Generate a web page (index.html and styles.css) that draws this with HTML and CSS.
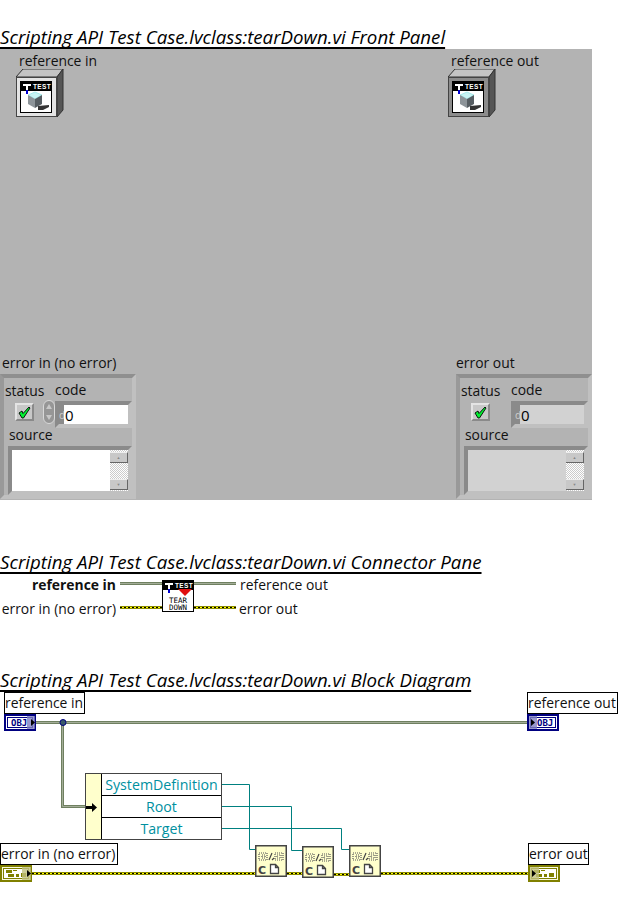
FILE: index.html
```html
<!DOCTYPE html>
<html>
<head>
  <meta charset="utf-8">
  <title>tearDown.vi</title>
  <link rel="stylesheet" href="styles.css">
</head>

<body>
  <!-- shared drawings -->
  <svg class="defs" width="0" height="0">
    <symbol id="head" viewBox="0 0 32 32">
      <rect x="0.5" y="0.5" width="31" height="31" fill="#fff" stroke="#000"/>
      <rect x="1" y="1" width="30" height="9" fill="#000"/>
      <rect x="3" y="3" width="8" height="2" fill="#fff"/>
      <rect x="6" y="3" width="2" height="6" fill="#fff"/>
      <rect x="6" y="9" width="2" height="4" fill="#0000d0"/>
      <text x="13" y="8" class="ico-txt">TEST</text>
    </symbol>
    <symbol id="cube" viewBox="0 0 32 32">
      <use href="#head" width="32" height="32"/>
      <polygon points="18,25 29,24 29,26 23,29 18,29" fill="#333"/>
      <polygon points="8,14 15,11 22,14 15,18" fill="#c8f4f4" stroke="#7fe0e0" stroke-width="0.6"/>
      <polygon points="8,14 15,18 15,27 8,23" fill="#8d9499"/>
      <polygon points="15,18 22,14 22,23 15,27" fill="#565d62"/>
    </symbol>
    <symbol id="ctl" viewBox="0 0 48 48">
      <polygon points="0,8 7,0 47,0 41,8" fill="#c4c4c4" stroke="#333"/>
      <polygon points="41,8 47,0 47,41 41,48" fill="#555" stroke="#333"/>
    </symbol>
    <symbol id="cnode" viewBox="0 0 32 32">
      <rect x="0.75" y="0.75" width="30.5" height="30.5" fill="#ffffcc" stroke="#444" stroke-width="1.5"/>
      <g fill="none" stroke="#555" stroke-width="1.2" stroke-dasharray="1 1">
        <rect x="4" y="8" width="8" height="7"/>
        <rect x="7" y="10" width="3" height="3"/>
        <rect x="20" y="8" width="8" height="7"/>
        <rect x="22" y="10" width="4" height="3"/>
      </g>
      <path d="M14 15 L17 8 M17 15 L19 13" stroke="#444" stroke-width="1.2"/>
      <text x="3" y="29" class="c-txt">C</text>
      <path d="M15.500 19.500 h5 l3 3 v6 h-8 z M20.500 19.500 v3 h3" fill="#fff" stroke="#444" stroke-width="1.300"/>
    </symbol>
    <symbol id="errbox" viewBox="0 0 32 17">
      <rect x="1" y="1" width="30" height="15" fill="#fafae0" stroke="#808000" stroke-width="2"/>
      <rect x="3.500" y="3.500" width="25" height="10" fill="#fff" stroke="#808000"/>
      <rect x="6" y="5" width="6" height="3" fill="#808000"/>
      <rect x="13" y="5" width="4" height="1" fill="#808000"/>
      <rect x="8" y="9" width="6" height="3" fill="#808000"/>
      <rect x="16" y="9" width="3" height="3" fill="#808000"/>
      <rect x="21" y="8" width="5" height="4" fill="#808000"/>
    </symbol>
  </svg>

  <h2 class="title first">Scripting API Test Case.lvclass:tearDown.vi Front Panel</h2>

  <div class="panel">
    <div class="ctl ctl-in">
      <span class="ctl-label">reference in</span>
      <div class="ctl-box">
        <svg class="ctl-3d" width="48" height="48"><use href="#ctl"/></svg>
        <div class="ctl-face"><svg width="32" height="32"><use href="#cube"/></svg></div>
      </div>
    </div>
    <div class="ctl ctl-out">
      <span class="ctl-label">reference out</span>
      <div class="ctl-box">
        <svg class="ctl-3d" width="48" height="48"><use href="#ctl"/></svg>
        <div class="ctl-face dark"><svg width="32" height="32"><use href="#cube"/></svg></div>
      </div>
    </div>

    <!-- error in -->
    <div class="err err-in">
      <span class="err-name">error in (no error)</span>
      <div class="cluster">
        <div class="err-row">
          <div class="status">
            <span class="status-label">status</span>
            <div class="check"><svg width="13" height="13" viewBox="0 0 13 13"><path d="M1 7 L4 5 L5 7.500 L11 1 L12 2 L5.500 12 L4 12 Z" fill="#00f030" stroke="#000" stroke-width="0.9"/></svg></div>
          </div>
          <div class="spin"><span class="up"></span><span class="down"></span></div>
          <div class="code">
            <span class="code-label">code</span>
            <div class="num"><span class="radix">d</span><span class="num-val">0</span></div>
          </div>
        </div>
        <div class="src-label">source</div>
        <div class="str">
          <div class="str-text"></div>
          <div class="sbar"><span class="sbtn">&#9650;</span><span class="sbtn">&#9660;</span></div>
        </div>
      </div>
    </div>

    <!-- error out -->
    <div class="err err-out">
      <span class="err-name">error out</span>
      <div class="cluster">
        <div class="err-row">
          <div class="status">
            <span class="status-label">status</span>
            <div class="check"><svg width="13" height="13" viewBox="0 0 13 13"><path d="M1 7 L4 5 L5 7.500 L11 1 L12 2 L5.500 12 L4 12 Z" fill="#00f030" stroke="#000" stroke-width="0.9"/></svg></div>
          </div>
          <div class="spin none"></div>
          <div class="code">
            <span class="code-label">code</span>
            <div class="num ro"><span class="radix">d</span><span class="num-val">0</span></div>
          </div>
        </div>
        <div class="src-label">source</div>
        <div class="str ro">
          <div class="str-text"></div>
          <div class="sbar"><span class="sbtn">&#9650;</span><span class="sbtn">&#9660;</span></div>
        </div>
      </div>
    </div>
  </div>

  <h2 class="title second">Scripting API Test Case.lvclass:tearDown.vi Connector Pane</h2>

  <div class="pane">
    <span class="in-name req">reference in</span>
    <div class="wire w-ref"></div>
    <div class="pane-icon">
      <svg width="32" height="32"><use href="#head"/><polygon points="16,9 30,9 23,16" fill="#e01010"/></svg>
      <span class="tear">TEAR<br>DOWN</span>
    </div>
    <div class="wire w-ref"></div>
    <span class="out-name">reference out</span>
    <span class="in-name">error in (no error)</span>
    <div class="wire w-err"></div>
    <div class="wire w-err"></div>
    <span class="out-name err-end">error out</span>
  </div>

  <h2 class="title third">Scripting API Test Case.lvclass:tearDown.vi Block Diagram</h2>

  <div class="diagram">
    <svg class="wires" width="618" height="200">
      <!-- teal refs -->
      <g fill="none" stroke="#008080" stroke-width="1">
        <path d="M222 94.500 H249.500 V159.500 H255"/>
        <path d="M222 116.500 H291.500 V160.500 H302"/>
        <path d="M222 138.500 H341.500 V159.500 H349"/>
      </g>
      <!-- object wire -->
      <g fill="none" stroke="#6f8060" stroke-width="3">
        <path d="M36 32.500 H527"/>
        <path d="M62.500 32.500 V116.500 H90"/>
      </g>
      <g fill="none" stroke="#a3ad98" stroke-width="1">
        <path d="M36 32.500 H527"/>
        <path d="M62.500 32.500 V116.500 H90"/>
      </g>
      <circle cx="63" cy="32.500" r="3" fill="#3a5a6a" stroke="#000080"/>
      <!-- error wire -->
      <g fill="none" stroke="#8a8a00" stroke-width="3">
        <path d="M32 183.500 H255 M287 183.500 H302 M334 184.500 H349 M381 183.500 H528"/>
      </g>
      <g fill="none" stroke="#ffff00" stroke-width="1">
        <path d="M32 183.500 H255 M287 183.500 H302 M334 184.500 H349 M381 183.500 H528"/>
      </g>
      <g fill="none" stroke="#000" stroke-width="1" stroke-dasharray="2 2">
        <path d="M32 183.500 H255 M287 183.500 H302 M334 184.500 H349 M381 183.500 H528"/>
      </g>
    </svg>

    <span class="lbl l-refin">reference in</span>
    <svg class="term t-refin" width="32" height="17">
      <rect x="1" y="1" width="30" height="15" fill="#fff" stroke="#000080" stroke-width="2"/>
      <rect x="3.500" y="3.500" width="25" height="10" fill="#fff" stroke="#000080"/>
      <text x="7" y="12" class="obj">OBJ</text>
      <rect x="23" y="2" width="8" height="13" fill="#8080c0" opacity="0.8"/>
      <polygon points="27,5 31,8.500 27,12" fill="#000"/>
    </svg>

    <span class="lbl l-refout">reference out</span>
    <svg class="term t-refout" width="32" height="17">
      <rect x="1" y="1" width="30" height="15" fill="#fff" stroke="#000080" stroke-width="2"/>
      <rect x="3.500" y="3.500" width="25" height="10" fill="#fff" stroke="#000080"/>
      <text x="10" y="12" class="obj">OBJ</text>
      <rect x="2" y="2" width="8" height="13" fill="#8080c0" opacity="0.8"/>
      <polygon points="4,5 8,8.500 4,12" fill="#000"/>
    </svg>

    <span class="lbl l-errin">error in (no error)</span>
    <svg class="term t-errin" width="32" height="17">
      <use href="#errbox"/>
      <rect x="22" y="2" width="9" height="13" fill="#c0c080" opacity="0.8"/>
      <polygon points="27,5 31,8.500 27,12" fill="#000"/>
    </svg>

    <span class="lbl l-errout">error out</span>
    <svg class="term t-errout" width="32" height="17">
      <use href="#errbox"/>
      <rect x="2" y="2" width="9" height="13" fill="#c0c080" opacity="0.8"/>
      <polygon points="4,5 8,8.500 4,12" fill="#000"/>
    </svg>

    <div class="prop">
      <div class="prop-side"><svg width="15" height="9"><path d="M0 4.500 H7" stroke="#000" stroke-width="3"/><polygon points="6,0 11,4.500 6,9" fill="#000"/></svg></div>
      <div class="prop-rows">
        <span class="prop-row">SystemDefinition</span>
        <span class="prop-row">Root</span>
        <span class="prop-row">Target</span>
      </div>
    </div>

    <svg class="node n1" width="32" height="32"><use href="#cnode"/></svg>
    <svg class="node n2" width="32" height="32"><use href="#cnode"/></svg>
    <svg class="node n3" width="32" height="32"><use href="#cnode"/></svg>
  </div>
</body>
</html>
```

FILE: styles.css
```css
body {
  margin: 0;
  background: #fff;
  color: #111;
  font-family: "Open Sans", sans-serif;
  font-size: 13.9px;
  width: 618px;
  overflow-x: hidden;
}

.defs {
  display: none;
}

.ico-txt {
  font: bold 6.5px "Liberation Sans", sans-serif;
  letter-spacing: 0.4px;
  fill: #fff;
}

.c-txt {
  font: bold 11px "DejaVu Sans", sans-serif;
  fill: #444;
}

.title {
  margin: 0;
  height: 24px;
  line-height: 24px;
  font-size: 18.7px;
  font-weight: normal;
  font-style: italic;
  white-space: nowrap;
  color: #000;
  text-decoration: underline;
  text-decoration-thickness: 2px;
  text-underline-offset: 3px;
  text-decoration-skip-ink: none;
}

.first { margin-top: 25px; }
.second { margin-top: 50px; }
.third { margin-top: 51px; }

/* front panel */
.panel {
  position: relative;
  width: 592px;
  height: 451px;
  background: #b3b3b3;
}

.ctl {
  position: absolute;
  top: 2px;
}

.ctl-in { left: 16px; }
.ctl-out { left: 448px; }

.ctl-label {
  display: block;
  height: 18px;
  line-height: 20px;
  padding-left: 3px;
  white-space: nowrap;
}

.ctl-box {
  position: relative;
  width: 48px;
  height: 48px;
}

.ctl-3d {
  display: block;
}

.ctl-face {
  position: absolute;
  left: 0;
  top: 8px;
  width: 41px;
  height: 40px;
  box-sizing: border-box;
  padding: 3px;
  background: #e4e4e4;
  border: 1px solid #444;
}

.ctl-face.dark {
  background: #8c8c8c;
}

.ctl-face svg {
  display: block;
}

/* error clusters */
.err {
  position: absolute;
  top: 305px;
  width: 136px;
}

.err-in { left: 0; }
.err-out { left: 456px; }

.err-name {
  display: block;
  height: 20px;
  line-height: 18px;
  padding-left: 2px;
  white-space: nowrap;
}

.err-out .err-name {
  padding-left: 0;
}

.cluster {
  box-sizing: border-box;
  width: 136px;
  height: 125px;
  border: 4px solid;
  border-color: #8f8f8f #c0c0c0 #c0c0c0 #999;
}

.err-row {
  display: flex;
  height: 50px;
}

.status {
  width: 39px;
}

.status-label,
.code-label {
  display: block;
  height: 23px;
  line-height: 26px;
  padding-left: 1px;
}

.code-label {
  padding-left: 0;
  line-height: 24px;
}

.status .check {
  margin: 2px 0 0 11px;
  width: 19px;
  height: 18px;
  box-sizing: border-box;
  background: #c8c8c8;
  border: 2px solid;
  border-color: #e4e4e4 #8a8a8a #8a8a8a #e4e4e4;
  display: flex;
  align-items: center;
  justify-content: center;
}

.spin {
  width: 12px;
  height: 24px;
  margin-top: 22px;
  border-radius: 6px;
  background: #969696;
  border: 1px solid #d8d8d8;
  box-sizing: border-box;
  display: flex;
  flex-direction: column;
  align-items: center;
  justify-content: space-around;
}

.spin.none {
  visibility: hidden;
}

.up,
.down {
  width: 0;
  height: 0;
  border-left: 3px solid transparent;
  border-right: 3px solid transparent;
}

.up { border-bottom: 5px solid #c8c8c8; }
.down { border-top: 5px solid #c8c8c8; }

.code {
  width: 77px;
}

.num {
  display: flex;
  box-sizing: border-box;
  width: 77px;
  height: 27px;
  border: 4px solid;
  border-color: #8a8a8a #c0c0c0 #c0c0c0 #8a8a8a;
  background: #fff;
}

.num.ro {
  background: #d2d2d2;
}

.radix {
  width: 5px;
  overflow: hidden;
  background: #8a8a8a;
  color: #cfcfcf;
  font-size: 10px;
  line-height: 20px;
}

.num-val {
  padding-left: 1px;
  line-height: 20px;
  font-size: 15px;
  color: #000;
}

.src-label {
  height: 18px;
  line-height: 14px;
  padding-left: 5px;
}

.str {
  display: flex;
  box-sizing: border-box;
  width: 124px;
  height: 49px;
  margin-left: 4px;
  border: 4px solid;
  border-color: #8a8a8a #c0c0c0 #c0c0c0 #8a8a8a;
  background: #fff;
}

.str.ro {
  background: #d2d2d2;
}

.str-text {
  flex: 1;
}

.sbar {
  width: 18px;
  display: flex;
  flex-direction: column;
  justify-content: space-between;
  padding: 2px 0 1px;
  box-sizing: border-box;
  background: repeating-conic-gradient(#fff 0 25%, #ccc 0 50%) 0 0 / 2px 2px;
}

.sbtn {
  height: 9px;
  background: #c8c8c8;
  border-right: 1px solid #666;
  border-bottom: 1px solid #666;
  border-top: 1px solid #eee;
  box-sizing: content-box;
  color: #888;
  font-size: 4px;
  line-height: 9px;
  text-align: center;
}

/* connector pane */
.pane {
  display: grid;
  grid-template-columns: 116px 4px 42px 32px 42px 4px 1fr;
  grid-template-rows: 24px 24px;
  height: 45px;
  margin-top: -2px;
  align-items: center;
  white-space: nowrap;
}

.in-name {
  grid-column: 1;
  text-align: right;
}

.req {
  font-weight: bold;
}

.wire {
  height: 3px;
  margin-top: -1px;
}

.w-ref {
  background: linear-gradient(#6f8060 0 1px, #a3ad98 1px 2px, #6f8060 2px);
}

.w-err {
  grid-row: 2;
  background:
    repeating-linear-gradient(90deg, #000 0 2px, #ffff00 2px 4px) 0 1px / 100% 1px no-repeat,
    #8a8a00;
}

.in-name + .wire {
  grid-column: 3;
}

.pane-icon {
  grid-column: 4;
  grid-row: 1 / 3;
  position: relative;
  width: 32px;
  height: 32px;
  margin-top: -1px;
  z-index: 1;
}

.pane-icon svg {
  display: block;
}

.tear {
  position: absolute;
  left: 1px;
  right: 1px;
  top: 17px;
  text-align: center;
  font: 7.5px/7.5px "DejaVu Sans Mono", monospace;
  color: #000;
}

.wire + .pane-icon + .wire {
  grid-column: 5;
}

.w-err + .w-err {
  grid-column: 5;
}

.out-name {
  grid-column: 7;
}

.err-end {
  margin-left: -1px;
}

/* block diagram */
.diagram {
  position: relative;
  height: 200px;
  margin-top: -2px;
}

.wires {
  position: absolute;
  left: 0;
  top: 0;
}

.lbl {
  position: absolute;
  box-sizing: border-box;
  height: 22px;
  line-height: 20px;
  background: #fff;
  border: 1px solid #000;
  white-space: nowrap;
}

.l-refin { left: 4px; top: 2px; width: 81px; }
.l-refout { left: 527px; top: 2px; width: 91px; }
.l-errin { left: 0; top: 153px; width: 118px; }
.l-errout { left: 528px; top: 153px; width: 61px; }

.term {
  position: absolute;
}

.obj {
  font: bold 9px "DejaVu Sans Mono", monospace;
  fill: #000080;
}

.t-refin { left: 4px; top: 24px; }
.t-refout { left: 527px; top: 24px; }
.t-errin { left: 0; top: 175px; }
.t-errout { left: 528px; top: 175px; }

.prop {
  position: absolute;
  left: 85px;
  top: 83px;
  width: 137px;
  height: 67px;
  box-sizing: border-box;
  display: flex;
  background: #fff;
  border: 1px solid #444;
}

.prop-side {
  width: 15px;
  background: #ffffcc;
  border-right: 1px solid #000;
  display: flex;
  align-items: center;
}

.prop-side svg {
  margin-top: 1px;
}

.prop-rows {
  flex: 1;
  display: flex;
  flex-direction: column;
}

.prop-row {
  flex: 1;
  line-height: 21px;
  text-align: center;
  color: #00909f;
  font-size: 14.2px;
  border-bottom: 1px solid #000;
}

.prop-row:last-child {
  border-bottom: 0;
}

.node {
  position: absolute;
}

.n1 { left: 255px; top: 155px; }
.n2 { left: 302px; top: 156px; }
.n3 { left: 349px; top: 155px; }
```
